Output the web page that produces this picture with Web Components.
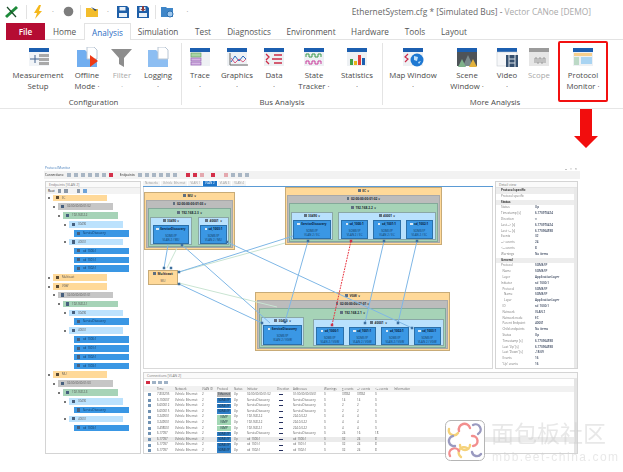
<!DOCTYPE html>
<html>
<head>
<meta charset="utf-8">
<style>
  html, body { margin: 0; padding: 0; background: #fff; }
  body { width: 623px; height: 472px; overflow: hidden; font-family: "Open Sans", "Liberation Sans", sans-serif; }
</style>
</head>
<body>
<canoe-app></canoe-app>

<script>
const ICONS = {
  setup: `<rect x="3" y="1" width="20" height="4" fill="#1c5fb0"/><rect x="3" y="5" width="20" height="14" fill="#f1f4f7"/><rect x="13" y="7" width="10" height="3" fill="#a9a9a9"/><rect x="13" y="11" width="10" height="3" fill="#a9a9a9"/><rect x="13" y="15" width="10" height="3" fill="#a9a9a9"/><path d="M4 12H13M9 8V16" stroke="#41618c" fill="none"/>`,
  offline: `<path d="M2 3h8l2 2h10v15H2z" fill="#71aef0"/><path d="M12 0h7l3 3v9H12z" fill="#fff" stroke="#b9c6d4"/><path d="M15 8l8 6-8 6z" fill="#ee3a15"/>`,
  filter: `<path d="M1 2H22L14 11V20L9 17V11z" fill="#8d8d8d"/>`,
  logging: `<path d="M2 3h8l2 2h10v15H2z" fill="#8dbef2"/><path d="M12 0h7l3 3v9H12z" fill="#fff" stroke="#b9c6d4"/>`,
  trace: `<rect x="2" y="1" width="20" height="4" fill="#1c5fb0"/><rect x="2" y="5" width="20" height="14" fill="#eef1f4"/><rect x="3" y="6" width="10" height="4" fill="#a9d4a5" stroke="#5a9a58" stroke-width=".6"/><rect x="3" y="11" width="10" height="3" fill="#d5b6e4" stroke="#8a4fa8" stroke-width=".6"/><rect x="3" y="15" width="10" height="3" fill="#d5b6e4" stroke="#8a4fa8" stroke-width=".6"/>`,
  graphics: `<rect x="2" y="1" width="20" height="4" fill="#1c5fb0"/><rect x="2" y="5" width="20" height="14" fill="#eef1f4"/><path d="M5 6V18H23" stroke="#666" fill="none"/><path d="M6 15l4-6 4 5 4-5 3 3" stroke="#2d6cc0" fill="none"/><path d="M6 11l4 5 4-4 4 3 3-3" stroke="#d43b6b" fill="none" stroke-width=".8"/>`,
  data: `<rect x="2" y="1" width="20" height="4" fill="#1c5fb0"/><rect x="2" y="5" width="20" height="14" fill="#eef1f4"/><path d="M4 7l3 3-3 3M4 14l3 3M12 8h8M10 12h10M12 16h8" stroke="#cc2b45" fill="none" stroke-width="1.3"/>`,
  tracker: `<rect x="2" y="1" width="20" height="4" fill="#1c5fb0"/><rect x="2" y="5" width="20" height="14" fill="#eef1f4"/><path d="M4 10V7h3v3h3V7h3v3h3V7h3v3" stroke="#3d9a4c" fill="none"/><path d="M4 17v-3h3v3h3v-3h3v3h3v-3h3v3" stroke="#cb3c9b" fill="none"/>`,
  statistics: `<rect x="2" y="1" width="20" height="4" fill="#1c5fb0"/><rect x="2" y="5" width="20" height="14" fill="#eef1f4"/><rect x="5" y="12" width="3" height="6" fill="#43a047"/><rect x="9" y="14" width="3" height="4" fill="#e9b21a"/><rect x="13" y="8" width="3" height="10" fill="#e03b3b"/><rect x="17" y="11" width="3" height="7" fill="#1c5fb0"/>`,
  map: `<rect x="2" y="1" width="20" height="4" fill="#1c5fb0"/><rect x="2" y="5" width="20" height="14" fill="#eef1f4"/><circle cx="16" cy="13" r="6.5" fill="#1e78d2"/><path d="M13 9l4 1-1 4-3-1zM17 15l3-1-2 3z" fill="#bfe0fa"/><path d="M7 7L4 10l3 2-3 3" stroke="#cb2b4a" fill="none" stroke-width="1.2"/>`,
  scene: `<rect x="2" y="1" width="20" height="4" fill="#1c5fb0"/><rect x="2" y="5" width="20" height="14" fill="#4e5358"/><path d="M8 19l5-11 5 11z" fill="#7a8a8c"/><path d="M3 20l4-8 4 8z" fill="#7fb28a"/><path d="M14 20l4-8 4 8z" fill="#e3b23c"/>`,
  video: `<rect x="2" y="1" width="20" height="4" fill="#1c5fb0"/><rect x="2" y="5" width="20" height="14" fill="#f6f7f9" stroke="#bcc3ca" stroke-width=".5"/><rect x="11" y="8" width="12" height="12" fill="#36506f"/><path d="M14 8v12M20 8v12M14 12h6M14 16h6" stroke="#d8e0e8"/>`,
  scope: `<rect x="2" y="1" width="20" height="4" fill="#9b9b9b"/><rect x="2" y="5" width="20" height="14" fill="#e6e6e6"/><path d="M8 16v-5h2v5h2v-5h2v5h2v-5h2v5" stroke="#999" fill="none"/>`,
  protocol: `<rect x="2" y="1" width="20" height="4" fill="#1c5fb0"/><rect x="2" y="5" width="20" height="14" fill="#eef1f4"/><rect x="3" y="6" width="18" height="3" fill="#f7cf8c"/><rect x="3" y="10" width="5" height="8" fill="#bcd9c6"/><rect x="10" y="10" width="11" height="7" fill="#a9d4f2"/>`
};

customElements.define("ribbon-item", class extends HTMLElement {
  constructor() {
    super();
    const icon = ICONS[this.getAttribute("icon")];
    const w = this.getAttribute("w");
    const root = this.attachShadow({ mode: "open" });
    root.innerHTML = `
    <style>
      :host { display: flex; flex-direction: column; align-items: center; width: ${w}px; flex: none; text-align: center;
        font-size: 7.8px; line-height: 10.5px; color: ${this.hasAttribute("off") ? "#a8a8a8" : "#4a4a4a"}; }
      svg { display: block; width: 24px; height: 21px; margin-bottom: 2px; flex: none; }
    </style>
    <svg viewBox="0 0 24 21">${icon}</svg>
    <div><slot></slot></div>`;
  }
});

customElements.define("ribbon-group", class extends HTMLElement {
  constructor() {
    super();
    const root = this.attachShadow({ mode: "open" });
    root.innerHTML = `
    <style>
      :host { display: flex; flex-direction: column; flex: none; height: 62px; margin-top: 3px; border-right: 1px solid #e4e4e4; box-sizing: border-box; }
      :host([last]) { border-right: none; }
      .items { display: flex; flex: 1; align-items: flex-start; padding-top: 4px; }
      .name { height: 12px; line-height: 12px; font-size: 7.8px; color: #4a4a4a; text-align: center; margin-bottom: -3px; padding-left: var(--name-shift, 0); }
    </style>
    <div class="items"><slot></slot></div>
    <div class="name">${this.getAttribute("name")}</div>`;
  }
});

customElements.define("app-ribbon", class extends HTMLElement {
  constructor() {
    super();
    const root = this.attachShadow({ mode: "open" });
    root.innerHTML = `
    <style>
      :host { display: block; position: relative; height: 109px; font-family: "Open Sans", "Liberation Sans", sans-serif; }
      .qat { height: 23px; display: flex; align-items: center; padding-left: 5px; position: relative; }
      .qat svg { display: block; flex: none; }
      .sep { width: 1px; height: 14px; background: #e2e2e2; flex: none; }
      .dot { font-size: 7px; width: 2px; color: #888; flex: none; }
      .title { position: absolute; right: 32px; top: 6px; font-size: 8.4px; line-height: 12px; color: #666; white-space: nowrap; }
      .title span { color: #a9a9a9; }
      .tabs { height: 17px; display: flex; align-items: stretch; padding-left: 6px; font-size: 8.2px; color: #555; }
      .tab { display: flex; align-items: center; justify-content: center; flex: none; border-bottom: 1px solid #e3e3e3; box-sizing: border-box; }
      .file { width: 39px; background: #b50c33; color: #fff; font-weight: 600; border-bottom: 0; }
      .active { color: #2b6cc4; background: #fff; border: 1px solid #e3e3e3; border-bottom: 0; }
      .body { display: flex; height: 69px; border-bottom: 1px solid #e6e6e6; padding-left: 6px; box-sizing: border-box; }
      .box { position: absolute; left: 558px; top: 41px; width: 50px; height: 61px; border: 2px solid #f21010; border-radius: 2px; box-sizing: border-box; }
      .arrow { position: absolute; left: 574px; top: 109px; }
    </style>
    <div class="qat">
      <svg width="14" height="14" viewBox="0 0 14 14" style="margin-right:7px"><path d="M1 12L12 2" stroke="#1d8a3a" stroke-width="3"/><path d="M2 2l9 10" stroke="#1b4e2b" stroke-width="1.2"/></svg>
      <div class="sep" style="margin-right:6px"></div>
      <svg width="10" height="14" viewBox="0 0 10 14" style="margin-right:9px"><path d="M6 0L1 8h3L2 14l7-8H6l2-6z" fill="#f5b81c"/></svg>
      <span class="dot" style="margin-right:8.5px">·</span>
      <svg width="11" height="11" viewBox="0 0 11 11" style="margin-right:6.5px"><circle cx="5.5" cy="5.5" r="4.8" fill="#7d7d7d"/></svg>
      <div class="sep" style="margin-right:4.5px"></div>
      <svg width="13" height="12" viewBox="0 0 13 12" style="margin-right:8.5px"><path d="M0 2h5l1 1h6v8H0z" fill="#f3bd2c"/><path d="M5 1l6 3-2 1z" fill="#26456e"/></svg>
      <span class="dot" style="margin-right:8px">·</span>
      <svg width="12" height="12" viewBox="0 0 12 12" style="margin-right:8px"><path d="M0 0h10l2 2v10H0z" fill="#1e5fa8"/><rect x="2.5" y="1" width="6" height="3.5" fill="#e8f0f8"/><rect x="2" y="7" width="8" height="4" fill="#e8f0f8"/></svg>
      <svg width="12" height="12" viewBox="0 0 12 12" style="margin-right:6px"><path d="M0 0h10l2 2v10H0z" fill="#1e5fa8"/><rect x="2.5" y="1" width="6" height="4" fill="#e8f0f8"/><rect x="2" y="7" width="8" height="4" fill="#e8f0f8"/><path d="M5 0h2v3h1.5L6 5.5 3.5 3H5z" fill="#8d3b3b"/></svg>
      <div class="sep" style="margin-right:4.5px"></div>
      <svg width="13" height="13" viewBox="0 0 13 13" style="margin-right:13px"><path d="M0 2h5l1 1h6v9H0z" fill="#3f86c8"/><circle cx="9" cy="9" r="3" fill="#9fc8ee" stroke="#2c6fb0"/></svg>
      <span class="dot">·</span>
      <div class="title">EthernetSystem.cfg * [Simulated Bus] - <span>Vector CANoe [DEMO]</span></div>
    </div>
    <div class="tabs">
      <div class="tab file">File</div>
      <div class="tab" style="width:39px">Home</div>
      <div class="tab active" style="width:47px">Analysis</div>
      <div class="tab" style="width:54px">Simulation</div>
      <div class="tab" style="width:36px">Test</div>
      <div class="tab" style="width:56px">Diagnostics</div>
      <div class="tab" style="width:68px">Environment</div>
      <div class="tab" style="width:50px">Hardware</div>
      <div class="tab" style="width:40px">Tools</div>
      <div class="tab" style="width:38px">Layout</div>
      <div class="tab" style="flex:1"></div>
    </div>
    <div class="body"><slot></slot></div>
    <div class="box"></div>
    <svg class="arrow" width="24" height="39" viewBox="0 0 24 39"><path d="M6 0H18V27H24L12 39 0 27H6z" fill="#f20d0d"/></svg>`;
  }
});

customElements.define("panel-box", class extends HTMLElement {
  constructor() {
    super();
    const root = this.attachShadow({ mode: "open" });
    root.innerHTML = `
    <style>
      :host { display: flex; flex-direction: column; border: 1px solid #d4d4d4; background: #fff; box-sizing: border-box; min-width: 0; overflow: hidden; }
      .head { height: 5px; line-height: 5px; font-size: 3.4px; color: #777; padding-left: 3px; background: #fafafa; border-bottom: 1px solid #e4e4e4; flex: none; }
    </style>
    <div class="head">${this.getAttribute("heading")}</div>
    <slot></slot>`;
  }
});

customElements.define("tree-row", class extends HTMLElement {
  constructor() {
    super();
    const kind = this.getAttribute("kind");
    const fills = { node: "#ffd999", mac: "#c6c6c6", ip: "#a6d3b7", port: "#bce2fd", ep: "#3a97e4" };
    const left = { node: 7, mac: 12, ip: 17, port: 23, ep: 28 }[kind];
    const right = { node: 61, mac: 67, ip: 72, port: 77, ep: 83 }[kind];
    const root = this.attachShadow({ mode: "open" });
    root.innerHTML = `
    <style>
      :host { display: block; height: 8.85px; flex: none; }
      .bar { margin-left: ${left}px; width: ${right - left}px; height: 6.6px; line-height: 6.6px; background: ${fills[kind]};
        font-size: 2.9px; color: ${kind === "ep" ? "#0a2f55" : "#555"}; padding-left: 9px; box-sizing: border-box; white-space: nowrap; overflow: hidden; position: relative; }
      .bar::before { content: ""; position: absolute; left: 3px; top: 1.6px; width: 3px; height: 3.2px; background: ${kind === "node" ? "#5b4a33" : "#47607e"}; }
      .tw { position: absolute; left: ${left - 5}px; margin-top: 2.5px; width: 2px; height: 2px; background: ${kind === "ep" ? "transparent" : "#777"}; }
    </style>
    <div class="tw"></div>
    <div class="bar"><slot></slot></div>`;
  }
});

customElements.define("dia-node", class extends HTMLElement {
  constructor() {
    super();
    const kind = this.getAttribute("kind");
    const styles = {
      node: "background:#ffd999;border:1px solid #c8ab77;",
      mac: "background:#bcbcbc;border:1px solid #a9a9a9;",
      ip: "background:#a6d3b7;border:1px solid #84a99a;",
      port: "background:#b9e1fd;border:1px solid #8aa7a5;",
      ep: "background:#3a97e4;border:1px solid #2b70aa;"
    };
    const title = { node: 7, mac: 7, ip: 8, port: 7 }[kind];
    const padb = { node: 1, mac: 0, ip: 1, port: 0 }[kind];
    const root = this.attachShadow({ mode: "open" });
    root.innerHTML = `
    <style>
      :host { display: flex; flex-direction: column; box-sizing: border-box; ${styles[kind]} flex: none; min-width: 0; }
      .t { height: ${title}px; line-height: ${title}px; font-size: 3.2px; font-weight: 700; text-align: center; color: #1d2a33; flex: none; white-space: nowrap; }
      .t::before { content: ""; display: inline-block; width: 2.6px; height: 3px; margin-right: 1.5px; background: #5f6f80; }
      .c { flex: 1; display: flex; gap: var(--gap, 3px); padding: 0 var(--pad, 1px) ${padb}px; min-height: 0; }
      .ep { flex: 1; display: flex; flex-direction: column; align-items: center; font-size: 2.9px; line-height: 4.4px; color: #123a60; padding-top: 1px; overflow: hidden; }
      .ep b { display: block; font-size: 3px; line-height: 4px; margin-bottom: 3px; color: #08213c; white-space: nowrap; }
      .ep b::before { content: ""; display: inline-block; width: 2.4px; height: 2.4px; background: #dde8f2; margin-right: 1.5px; }
      .ep span { white-space: nowrap; }
    </style>
    ${kind === "ep"
      ? `<div class="ep"><b>${this.getAttribute("name")}</b><span>SOME/IP</span><span>${this.getAttribute("sub")}</span></div>`
      : `<div class="t">${this.getAttribute("name")}</div><div class="c"><slot></slot></div>`}`;
  }
});

customElements.define("conn-table", class extends HTMLElement {
  constructor() {
    super();
    const rows = [
      ["7.833295","Ethernet","#b5b5b5","02:00:00:00:01:02","01:00:00:00:00:01","0","37862","37862","0"],
      ["6.100007","SOME/IP","#2f80c9","ServiceDiscovery","ServiceDiscovery","0","14","14","0"],
      ["6.600012","SOME/IP","#2f80c9","ServiceDiscovery","ServiceDiscovery","0","2","2","0"],
      ["6.600015","SOME/IP","#2f80c9","ServiceDiscovery","ServiceDiscovery","0","2","2","0"],
      ["3.249001","IGMP","#a3d8b5","192.168.2.2","224.0.0.22","0","4","4","0"],
      ["3.249001","IGMP","#a3d8b5","192.168.2.2","224.0.0.22","0","4","4","0"],
      ["3.498001","IGMP","#a3d8b5","192.168.2.1","224.0.0.22","0","4","4","0"],
      ["6.17097","SOME/IP","#2f80c9","ServiceDiscovery","ServiceDiscovery","0","24","16","18"],
      ["6.17097","SOME/IP","#2f80c9","sd_1000:1","sd_1000:1","0","32","24","8"],
      ["6.17097","SOME/IP","#2f80c9","sd_1001:1","sd_1001:1","0","32","24","8"],
      ["6.17097","SOME/IP","#2f80c9","sd_1002:1","sd_1002:1","0","32","24","8"]
    ];
    const cells = ["","Time","Network","VLAN ID","Protocol","Status","Initiator","Direction","Addresses","Warnings","∑ events","--> events","<-- events","Information"];
    const row = (r, i) => `
      <div class="r ${i === 8 ? "hl" : ""}">
        <i class="ico"></i><span>${r[0]}</span><span>Vehicle_Ethernet</span><span>2</span>
        <span class="p" style="background:${r[2]}">${r[1]}</span><span>Up</span><span>${r[3]}</span>
        <em></em><span>${r[4]}</span><span>${r[5]}</span><span>${r[6]}</span><span>${r[7]}</span><span>${r[8]}</span>
      </div>`;
    const root = this.attachShadow({ mode: "open" });
    root.innerHTML = `
    <style>
      :host { display: block; font-size: 2.9px; color: #555; flex: 1; min-height: 0; overflow: hidden; border-right: 3px solid #e4e4e4; }
      .tools { height: 7px; box-sizing: border-box; display: flex; align-items: center; gap: 2px; padding-left: 2px; }
      .tools i { width: 4px; height: 3.5px; background: #9fb2c6; }
      .tools i:first-child { background: #d32d43; }
      .r, .h { display: grid; grid-template-columns: 10px 18px 27px 15px 17px 13px 30px 16px 31px 18px 15px 18px 19px 1fr; height: 5.6px; line-height: 5.6px; white-space: nowrap; align-items: center; padding-left: 3px; }
      .h { height: 6px; line-height: 6px; background: #f1f1f1; color: #666; }
      .hl { background: #ebebeb; }
      .ico { width: 3px; height: 3px; background: #7192b3; display: block; margin-left: 1px; }
      .p { height: 4.8px; line-height: 4.8px; color: #123; margin-right: 3px; text-align: center; overflow: hidden; }
      em { display: block; height: 1px; width: 4px; background: #26305f; margin-left: 2px; }
      span { overflow: hidden; }
    </style>
    <div class="tools"><i></i><i></i><i></i><i></i></div>
    <div class="h">${cells.map(c => `<span>${c.replace(/</g, "&lt;").replace(/>/g, "&gt;")}</span>`).join("")}</div>
    ${rows.map(row).join("")}`;
  }
});

customElements.define("detail-view", class extends HTMLElement {
  constructor() {
    super();
    const rows = [
      ["h","Protocol specific"],["r","Protocol specific",""],
      ["h","Status"],["r","Status","Up"],["r","Timestamp [s]","6.170970424"],["r","Direction","━"],["r","Last --> [s]","6.170970424"],["r","Last <-- [s]","6.170964598"],["r","Events","32"],["r","--> events","24"],["r","<-- events","8"],["r","Warnings","No items"],
      ["h","General"],["r","Protocol","SOME/IP"],["r","  Name","SOME/IP"],["r","  Layer","ApplicationLayer"],["r","Initiator","sd_1000:1"],["r","  Protocol","SOME/IP"],["r","    Name","SOME/IP"],["r","    Layer","ApplicationLayer"],["r","  ID","sd_1000:1"],["r","  Network","VLAN 2"],["r","  Network node","EC"],["r","  Parent Endpoint","40001"],["r","  Child endpoints","No items"],["r","  Status","Up"],["r","  Timestamp [s]","6.170964598"],["r","  Last 'Up' [s]","6.170964598"],["r","  Last 'Down' [s]","-18:09"],["r","  Events","16"],["r","  'Up' events","16"]
    ];
    const root = this.attachShadow({ mode: "open" });
    root.innerHTML = `
    <style>
      :host { display: block; font-size: 3px; color: #777; flex: 1; min-height: 0; overflow: hidden; border-right: 3px solid #e9e9e9; }
      div { height: 5.8px; line-height: 5.8px; display: grid; grid-template-columns: 34px 1fr; white-space: pre; padding-left: 5px; }
      .h { background: #ededed; font-weight: 700; color: #333; grid-template-columns: 1fr; }
      b { font-weight: 600; color: #35425a; }
    </style>
    ${rows.map(r => r[0] === "h"
      ? `<div class="h">${r[1]}</div>`
      : `<div><span>${r[1].replace(/</g, "&lt;").replace(/>/g, "&gt;")}</span><b>${r[2]}</b></div>`).join("")}`;
  }
});

customElements.define("protocol-window", class extends HTMLElement {
  constructor() {
    super();
    const root = this.attachShadow({ mode: "open" });
    root.innerHTML = `
    <style>
      :host { display: flex; flex-direction: column; width: 536px; height: 290px; margin-left: 44px; box-sizing: border-box; font-family: "Open Sans", "Liberation Sans", sans-serif; filter: blur(.35px); }
      .cap { height: 6px; display: flex; justify-content: space-between; align-items: center; font-size: 3.2px; color: #3e78b8; flex: none; padding: 0 3px 0 1px; }
      .bar { height: 8px; display: flex; align-items: center; gap: 3px; font-size: 3px; color: #555; background: #f2f2f2; flex: none; font-weight: 600; padding-left: 1px; }
      .bar i { width: 4px; height: 3.5px; background: #a9b6c4; flex: none; }
      .bar i.r { background: #d4304a; }
      .bar i.o { background: #e4a8ae; }
      .main { flex: 1; display: flex; gap: 2px; min-height: 0; padding: 2px 2px 1px 1px; }
      .left { width: 96px; flex: none; height: 100%; }
      .col { flex: 1; display: flex; flex-direction: column; gap: 3px; min-width: 0; }
      .top { flex: 1; display: flex; gap: 2px; min-height: 0; }
      .middle { flex: 1; display: flex; flex-direction: column; min-width: 0; }
      .right { width: 83px; flex: none; }
      .tb { height: 6px; flex: none; display: flex; align-items: center; gap: 3px; font-size: 3px; padding-left: 2px; background: #f3f3f3; }
      .tb i { width: 3.5px; height: 3.5px; background: #8b98a8; }
      .tb i.on { background: #6fa3d8; }
      .tabs { height: 6px; box-sizing: border-box; flex: none; display: flex; gap: 1px; font-size: 2.9px; line-height: 5px; color: #999; border-bottom: 1px solid #5b9bd5; }
      .tabs span { padding: 0 2px; background: #f4f4f4; white-space: nowrap; }
      .tabs .on { background: #1b74c9; color: #fff; }
      .canvas { position: relative; flex: 1; min-height: 0; background: #fff; border: 1px solid #d9d9d9; border-top: 0; overflow: hidden; }
      .tree { position: relative; padding-top: .6px; display: flex; flex-direction: column; }
      .conns { height: 82px; flex: none; }
    </style>
    <div class="cap"><span>Protocol Monitor</span><span style="color:#777;font-size:4px">–&nbsp;&nbsp;&nbsp;▫&nbsp;&nbsp;&nbsp;×</span></div>
    <div class="bar">Connections: <i></i><i></i><i></i><i></i><i></i><i></i><i class="r"></i><span style="width:1px"></span>Endpoints: <i></i><i></i><i></i><i></i><i></i><i></i><span style="width:3px"></span><i class="r"></i><i class="r"></i><i class="o"></i><span style="width:1px"></span><i class="r"></i><span style="width:3px"></span><i class="o"></i><i></i><i></i><i></i></div>
    <div class="main">
      <panel-box class="left" heading="Endpoints [VLAN 2]">
        <div class="tb">Root <i></i><i></i><span style="width:3px"></span><i></i><i class="on"></i></div>
        <div class="tree"><slot name="tree"></slot></div>
      </panel-box>
      <div class="col">
        <div class="top">
          <div class="middle">
            <div class="tabs"><span>Networks</span><span>Vehicle_Ethernet</span><span>VLAN 1</span><span class="on">VLAN 2</span><span>VLAN 3</span><span>VLAN 4</span></div>
            <div class="canvas"><slot name="canvas"></slot></div>
          </div>
          <panel-box class="right" heading="Detail view"><slot name="detail"></slot></panel-box>
        </div>
        <panel-box class="conns" heading="Connections [VLAN 2]"><slot name="table"></slot></panel-box>
      </div>
    </div>`;
  }
});

customElements.define("canoe-app", class extends HTMLElement {
  constructor() {
    super();
    const root = this.attachShadow({ mode: "open" });
    const ep = (name, sub) => `<dia-node kind="ep" name="${name}" sub="${sub}" style="flex:1"></dia-node>`;
    const tree = [
      ["node","EC"],["mac","02:00:00:00:01:02"],["ip","192.168.2.2"],["port","30490"],["ep","ServiceDiscovery"],["port","40001"],["ep","sd_1000:1"],["ep","sd_1001:1"],["ep","sd_1002:1"],
      ["node","Multicast"],["node","VGW"],["mac","02:00:00:00:01:01"],["ip","192.168.2.1"],["port","30490"],["ep","ServiceDiscovery"],["port","40001"],["ep","sd_1000:1"],["ep","sd_1001:1"],["ep","sd_1002:1"],["ep","sd_1003:1"],
      ["node","MU"],["mac","02:00:00:00:01:03"],["ip","192.168.2.3"],["port","30490"],["ep","ServiceDiscovery"],["port","40001"],["ep","sd_1003:1"]
    ];
    // connector ends, in picture coordinates (the svg viewBox starts at the canvas corner)
    const blue = [
      [168,245,164,268],[182,245,270,323],[179,272,293,236],[227,242,412,328],
      [179,284,262,323],[308,241,285,322],[384,241,365,323],[417,241,398,323]
    ];
    const green = [[177,248,167,268],[179,272,285,243],[179,283,277,307]];
    const pins = [[164,268],[171,268],[179,272],[179,284],[182,245],[227,242],[262,323],[285,322],[365,323],[398,323],[412,328],[308,241],[384,241],[417,241]];
    const line = l => `<path d="M${l[0]} ${l[1]}L${l[2]} ${l[3]}"/>`;
    root.innerHTML = `
    <style>
      :host { display: block; width: 623px; height: 472px; position: relative; overflow: hidden; background: #fff; }
      .gap { height: 56px; }
      .mark { position: absolute; left: 445px; top: 420px; z-index: 5; }
      .wm { position: absolute; left: 491px; top: 418px; z-index: 5; color: rgba(205,205,205,.45); font-family: "Noto Sans CJK SC", sans-serif; font-size: 23px; line-height: 28px; white-space: nowrap; }
      .wm2 { position: absolute; left: 492px; top: 451px; z-index: 5; color: rgba(205,205,205,.45); font-family: "Liberation Sans", sans-serif; font-size: 12px; line-height: 12px; white-space: nowrap; letter-spacing: 1.5px; }
      .n { position: absolute; }
    </style>
    <app-ribbon>
      <ribbon-group name="Configuration" style="width:176px">
        <ribbon-item icon="setup" w="64">Measurement<br>Setup</ribbon-item>
        <ribbon-item icon="offline" w="34">Offline<br>Mode ·</ribbon-item>
        <ribbon-item icon="filter" w="36" off>Filter<br>·</ribbon-item>
        <ribbon-item icon="logging" w="36">Logging<br>·</ribbon-item>
      </ribbon-group>
      <ribbon-group name="Bus Analysis" style="width:201px">
        <ribbon-item icon="trace" w="38" style="margin-left:-1px">Trace<br>·</ribbon-item>
        <ribbon-item icon="graphics" w="36">Graphics<br>·</ribbon-item>
        <ribbon-item icon="data" w="38">Data<br>·</ribbon-item>
        <ribbon-item icon="tracker" w="42">State<br>Tracker ·</ribbon-item>
        <ribbon-item icon="statistics" w="44">Statistics<br>·</ribbon-item>
      </ribbon-group>
      <ribbon-group name="More Analysis" style="width:176px;--name-shift:48px" last>
        <ribbon-item icon="map" w="62" style="margin-left:-1px">Map Window<br>·</ribbon-item>
        <ribbon-item icon="scene" w="46">Scene<br>Window ·</ribbon-item>
        <ribbon-item icon="video" w="34">Video<br>·</ribbon-item>
        <ribbon-item icon="scope" w="30" off>Scope</ribbon-item>
      </ribbon-group>
      <ribbon-item icon="protocol" w="50" style="margin:7px 0 0 -1px">Protocol<br>Monitor ·</ribbon-item>
    </app-ribbon>
    <div class="gap"></div>
    <protocol-window>
      ${tree.map(t => `<tree-row slot="tree" kind="${t[0]}">${t[1]}</tree-row>`).join("")}

      <dia-node slot="canvas" kind="node" name="MU ∨" class="n" style="left:0;top:5px;width:91px;height:58px">
        <dia-node kind="mac" name="02:00:00:00:01:03 ∨" style="flex:1">
          <dia-node kind="ip" name="192.168.2.3 ∨" style="flex:1;--gap:6px">
            <dia-node kind="port" name="30490 ∨" style="width:42px;--pad:2px">${ep("ServiceDiscovery","VLAN 2 / MU")}</dia-node>
            <dia-node kind="port" name="40001 ∨" style="flex:1">${ep("sd_1003:1","VLAN 2 / MU")}</dia-node>
          </dia-node>
        </dia-node>
      </dia-node>

      <dia-node slot="canvas" kind="node" name="EC ∨" class="n" style="left:141px;top:0;width:157px;height:58px">
        <dia-node kind="mac" name="02:00:00:00:01:02 ∨" style="flex:1">
          <dia-node kind="ip" name="192.168.2.2 ∨" style="flex:1;--gap:5px">
            <dia-node kind="port" name="30490 ∨" style="width:42px">${ep("ServiceDiscovery","VLAN 2 / EC")}</dia-node>
            <dia-node kind="port" name="40001 ∨" style="flex:1;--pad:2px;--gap:5px">${ep("sd_1000:1","VLAN 2 / EC")}${ep("sd_1001:1","VLAN 2 / EC")}${ep("sd_1002:1","VLAN 2 / EC")}</dia-node>
          </dia-node>
        </dia-node>
      </dia-node>

      <dia-node slot="canvas" kind="node" name="VGW ∨" class="n" style="left:111px;top:105px;width:195px;height:59px">
        <dia-node kind="mac" name="02:00:00:00:01:01 ∨" style="flex:1">
          <dia-node kind="ip" name="192.168.2.1 ∨" style="flex:1;--gap:9px">
            <dia-node kind="port" name="30490 ∨" style="width:43px">${ep("ServiceDiscovery","VLAN 2 / VGW")}</dia-node>
            <dia-node kind="port" name="40001 ∨" style="flex:1;margin-top:2px;--pad:2px;--gap:5px">${ep("sd_1000:1","VLAN 2 / VGW")}${ep("sd_1001:1","VLAN 2 / VGW")}${ep("sd_1002:1","VLAN 2 / VGW")}${ep("sd_1003:1","VLAN 2 / VGW")}</dia-node>
          </dia-node>
        </dia-node>
      </dia-node>

      <dia-node slot="canvas" kind="node" name="Multicast" class="n" style="left:4px;top:83px;width:30px;height:15px">
        <span style="font-size:3px;line-height:6px;text-align:center;width:100%;color:#555">MU</span>
      </dia-node>

      <svg slot="canvas" viewBox="144 187 348 181" style="position:absolute;left:0;top:0;width:348px;height:181px;z-index:2" fill="none">
        <g stroke="#c9e4d2" stroke-width="1">${green.map(line).join("")}</g>
        <g stroke="#7fb7e6" stroke-width="1">${blue.map(line).join("")}</g>
        <path d="M351 241L332 325" stroke="#e8323e" stroke-width="1" stroke-dasharray="1.8 1"/>
        <g fill="#3d6f9e">${pins.map(p => `<rect x="${p[0] - 1.25}" y="${p[1] - 1.25}" width="2.5" height="2.5"/>`).join("")}</g>
        <rect x="349.75" y="239.75" width="2.5" height="2.5" fill="#c8324a"/>
        <rect x="330.75" y="323.75" width="2.5" height="2.5" fill="#c8324a"/>
      </svg>

      <conn-table slot="table"></conn-table>
      <detail-view slot="detail"></detail-view>
    </protocol-window>

    <svg class="mark" width="40" height="41" viewBox="0 0 40 41" fill="none" stroke-width="2.4" stroke-linecap="round">
      <rect x=".5" y=".5" width="39" height="40" rx="5" fill="#fff" stroke="#b5b5b5" stroke-width="1"/>
      <g stroke="#f5d27a"><path d="M4 9a5 5 0 0 0 9 4"/><path d="M15 25a5 5 0 0 0 10 0"/><path d="M16 37a5 5 0 0 1 6-9"/></g>
      <g stroke="#f28e8e"><path d="M14 11a5.5 5.5 0 0 1 11-3"/><path d="M27 16a5 5 0 0 1 1 10"/><path d="M5 36a5 5 0 0 1 9-5"/></g>
      <g stroke="#9a9ac0"><path d="M28 5a5 5 0 0 1 5 9"/><path d="M8 16a5 5 0 0 0 2 10"/><path d="M27 32a5 5 0 0 0 9 2"/></g>
    </svg>
    <div class="wm">面包板社区</div>
    <div class="wm2">mbb.eet-china.com</div>`;
  }
});
</script>
</body>
</html>
